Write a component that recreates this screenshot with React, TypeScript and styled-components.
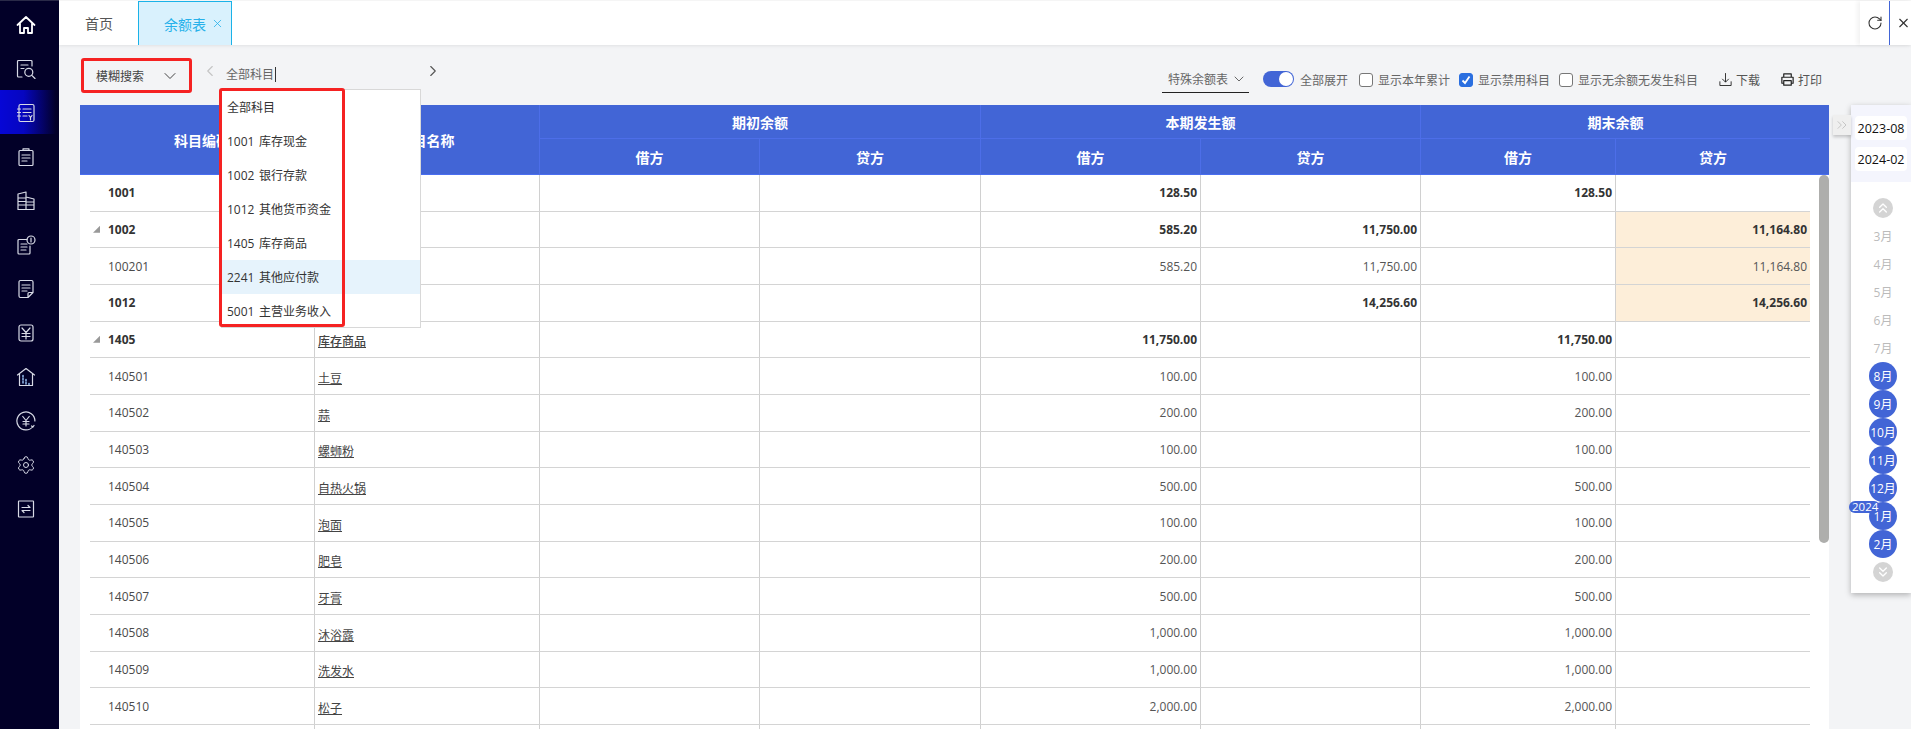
import * as React from 'react';
import styled, { createGlobalStyle } from 'styled-components';
import { ChevronDown, ChevronLeft, ChevronRight, ChevronsDown, ChevronsRight, ChevronsUp, RotateCw, Settings, X } from 'lucide-react';

type Row = {
  code: string,
  name: string,
  bold?: boolean,
  open?: boolean,
  values: { [col: number]: string },
  warn?: boolean,
};

// the names of the first four rows sit behind the open dropdown
const rows: Row[] = [
  { code: '1001', name: '', bold: true, values: { 2: '128.50', 4: '128.50' } },
  { code: '1002', name: '', bold: true, open: true, values: { 2: '585.20', 3: '11,750.00', 5: '11,164.80' }, warn: true },
  { code: '100201', name: '', values: { 2: '585.20', 3: '11,750.00', 5: '11,164.80' }, warn: true },
  { code: '1012', name: '', bold: true, values: { 3: '14,256.60', 5: '14,256.60' }, warn: true },
  { code: '1405', name: '库存商品', bold: true, open: true, values: { 2: '11,750.00', 4: '11,750.00' } },
  { code: '140501', name: '土豆', values: { 2: '100.00', 4: '100.00' } },
  { code: '140502', name: '蒜', values: { 2: '200.00', 4: '200.00' } },
  { code: '140503', name: '螺蛳粉', values: { 2: '100.00', 4: '100.00' } },
  { code: '140504', name: '自热火锅', values: { 2: '500.00', 4: '500.00' } },
  { code: '140505', name: '泡面', values: { 2: '100.00', 4: '100.00' } },
  { code: '140506', name: '肥皂', values: { 2: '200.00', 4: '200.00' } },
  { code: '140507', name: '牙膏', values: { 2: '500.00', 4: '500.00' } },
  { code: '140508', name: '沐浴露', values: { 2: '1,000.00', 4: '1,000.00' } },
  { code: '140509', name: '洗发水', values: { 2: '1,000.00', 4: '1,000.00' } },
  { code: '140510', name: '松子', values: { 2: '2,000.00', 4: '2,000.00' } },
  { code: '', name: '', values: {} },
];

const subjects = ['全部科目', '1001 库存现金', '1002 银行存款', '1012 其他货币资金', '1405 库存商品', '2241 其他应付款', '5001 主营业务收入'];
const months = ['3月', '4月', '5月', '6月', '7月', '8月', '9月', '10月', '11月', '12月', '1月', '2月'];
const BLUE = '#4265d6';

const GlobalStyle = createGlobalStyle`
  html, body {
    margin: 0;
    height: 100%;
    font-family: "Open Sans", "Noto Sans CJK SC", sans-serif;
    font-size: 12px;
  }
  * { box-sizing: border-box; }
`;

const Page = styled.div`
  display: flex;
  width: 100%;
  height: 100vh;
  overflow: hidden;
  background: #f3f4f6;
`;

const Sidebar = styled.nav`
  width: 59px;
  flex: none;
  padding-top: 1px;
  background: #020028;
  border-top: 1px solid #2a2a48;
`;

const NavItem = styled.div<{ $active?: boolean }>`
  height: 44px;
  display: flex;
  align-items: center;
  padding: 2px 0 0 16px;
  color: #d8dae6;
  background: ${p => p.$active ? 'linear-gradient(90deg, #0606d6 0%, #0606c0 40%, #020028 95%)' : 'transparent'};
`;

const Main = styled.div`
  flex: 1;
  min-width: 0;
  display: flex;
  flex-direction: column;
`;

const TabBar = styled.header`
  height: 45px;
  flex: none;
  display: flex;
  background: #fff;
  border-top: 1px solid #f5f5f5;
  box-shadow: 0 1px 3px rgba(0, 0, 0, 0.08);
  position: relative;
`;

const Tab = styled.div<{ $active?: boolean }>`
  display: flex;
  align-items: center;
  gap: 5px;
  font-size: 14px;
  padding-left: ${p => p.$active ? '25px' : '26px'};
  width: ${p => p.$active ? '94px' : '79px'};
  color: ${p => p.$active ? '#27b1ea' : '#555'};
  background: ${p => p.$active ? '#d9f1fd' : 'transparent'};
  border: ${p => p.$active ? '1px solid #1ab2e8' : 'none'};
  border-bottom: none;
`;

const TabTools = styled.div`
  margin-left: auto;
  display: flex;
  height: 44px;
  color: #333;
  box-shadow: -3px 0 4px rgba(0, 0, 0, 0.05);
`;

const ToolButton = styled.div<{ $divider?: boolean }>`
  display: flex;
  align-items: center;
  justify-content: center;
  width: ${p => p.$divider ? '30px' : '21px'};
  padding-left: ${p => p.$divider ? '0' : '6px'};
  border-right: ${p => p.$divider ? `1px solid ${BLUE}` : 'none'};
`;

const Workspace = styled.div`
  flex: 1;
  min-height: 0;
  display: flex;
`;

const LeftColumn = styled.div`
  width: 1749px;
  flex: none;
  margin-left: 21px;
  display: flex;
  flex-direction: column;
  min-height: 0;
`;

const Toolbar = styled.div`
  height: 60px;
  flex: none;
  display: flex;
  align-items: flex-start;
`;

const SearchMode = styled.div`
  width: 111px;
  height: 35px;
  margin: 13px 0 0 1px;
  padding: 0 9px 0 12px;
  display: flex;
  align-items: center;
  justify-content: space-between;
  border: 3px solid #f52222;
  border-radius: 3px;
  color: #444;
`;

const Picker = styled.div`
  position: relative;
  width: 240px;
  height: 32px;
  margin: 13px 0 0 9px;
  padding: 0 0 0 25px;
  display: flex;
  align-items: center;
  color: #666;
`;

const PickerText = styled.span`
  border-right: 1px solid #333;
  line-height: 15px;
  padding-right: 1px;
`;

const PickerArrow = styled.span<{ $side: 'left' | 'right' }>`
  position: absolute;
  top: 4px;
  display: flex;
  color: ${p => p.$side === 'left' ? '#c4c4c4' : '#555'};
  ${p => p.$side === 'left' ? 'left: 0;' : 'right: -1px;'}
`;

const Dropdown = styled.div`
  position: absolute;
  left: 20px;
  top: 31px;
  width: 200px;
  height: 239px;
  background: #fff;
  border: 1px solid #d8d8d8;
  z-index: 5;
`;

const DropdownItem = styled.div<{ $active?: boolean }>`
  height: 34px;
  padding-left: 5px;
  display: flex;
  align-items: center;
  white-space: pre;
  word-spacing: 1.5px;
  color: #333;
  background: ${p => p.$active ? '#e6f3fc' : 'transparent'};
`;

const Marker = styled.div`
  position: absolute;
  left: -3px;
  top: -2px;
  width: 126px;
  height: 239px;
  border: 3px solid #f52222;
  border-radius: 3px;
  pointer-events: none;
`;

const Options = styled.div`
  margin: 21px 7px 0 auto;
  height: 27px;
  display: flex;
  align-items: center;
  color: #666;
`;

const SpecialSelect = styled.div`
  width: 87px;
  height: 27px;
  padding-left: 6px;
  display: flex;
  align-items: center;
  gap: 3px;
  border-bottom: 1px solid #222;
  margin-right: 14px;
`;

const Switch = styled.span`
  width: 31px;
  height: 16px;
  margin: -2px 6px 0 0;
  border-radius: 8px;
  background: ${BLUE};
  position: relative;
  &::after {
    content: '';
    position: absolute;
    right: 1px;
    top: 1px;
    width: 14px;
    height: 14px;
    border-radius: 50%;
    background: #fff;
  }
`;

const Check = styled.label<{ $gap: number }>`
  display: flex;
  align-items: center;
  gap: 5px;
  margin-left: ${p => p.$gap}px;
`;

const Box = styled.span<{ $on?: boolean }>`
  width: 14px;
  height: 14px;
  display: flex;
  align-items: center;
  justify-content: center;
  border-radius: 3px;
  border: 1px solid ${p => p.$on ? '#2a6fe0' : '#777'};
  background: ${p => p.$on ? '#2a6fe0' : '#fff'};
`;

const Action = styled.div<{ $gap: number }>`
  display: flex;
  align-items: center;
  gap: 3px;
  margin-left: ${p => p.$gap}px;
  color: #555;
  svg { color: #222; }
`;

const Head = styled.div`
  flex: none;
  height: 70px;
  padding: 0 19px 0 10px;
  display: grid;
  grid-template-columns: 224px 225px 220px 221px 220px 220px 195px 195px;
  grid-template-rows: 34px 36px;
  background: ${BLUE};
  border-bottom: 1px solid #4a6ef0;
`;

const HeadCell = styled.div<{ $span?: number, $rows?: number, $line?: boolean, $under?: boolean }>`
  grid-column: span ${p => p.$span || 1};
  grid-row: span ${p => p.$rows || 1};
  display: flex;
  align-items: center;
  justify-content: center;
  color: #fff;
  font-size: 14px;
  font-weight: 700;
  border-left: ${p => p.$line ? '1px solid #4d6ee8' : 'none'};
  border-bottom: ${p => p.$under ? '1px solid #4d6ee8' : 'none'};
`;

const Body = styled.div`
  flex: 1;
  min-height: 0;
  position: relative;
  overflow: hidden;
  padding: 0 19px 0 10px;
  background: #fff;
`;

const Scrollbar = styled.div`
  position: absolute;
  top: 0;
  right: 0;
  width: 10px;
  height: 368px;
  border-radius: 5px;
  background: #aeaeac;
`;

const BodyRow = styled.div`
  height: 36.67px;
  display: grid;
  grid-template-columns: 224px 225px 220px 221px 220px 220px 195px 195px;
  border-bottom: 1px solid #d4d4d4;
`;

const CodeCell = styled.div<{ $bold?: boolean }>`
  position: relative;
  display: flex;
  align-items: center;
  padding-left: 18px;
  color: ${p => p.$bold ? '#333' : '#4a4a4a'};
  font-weight: ${p => p.$bold ? 700 : 400};
`;

const Triangle = styled.span`
  position: absolute;
  left: 3px;
  top: 14px;
  width: 7px;
  height: 7px;
  background: #999;
  clip-path: polygon(100% 0, 100% 100%, 0 100%);
`;

const NameCell = styled.div<{ $bold?: boolean }>`
  display: flex;
  align-items: center;
  padding: 4px 0 0 3px;
  border-left: 1px solid #d0d0d0;
  color: #444;
  font-weight: ${p => p.$bold ? 500 : 400};
  text-decoration: underline;
`;

const NumCell = styled.div<{ $bold?: boolean, $warn?: boolean }>`
  display: flex;
  align-items: center;
  justify-content: flex-end;
  padding-right: 3px;
  border-left: 1px solid #d0d0d0;
  color: ${p => p.$bold ? '#333' : '#555'};
  font-weight: ${p => p.$bold ? 700 : 400};
  background: ${p => p.$warn ? '#fdeed9' : 'transparent'};
`;

const RightPanel = styled.aside`
  position: relative;
  width: 60px;
  flex: none;
  margin: 60px 0 0 22px;
  align-self: flex-start;
  background: #fff;
  box-shadow: 0 2px 6px rgba(0, 0, 0, 0.28);
`;

const Collapse = styled.div`
  position: absolute;
  left: -18px;
  top: 10px;
  width: 18px;
  height: 20px;
  display: flex;
  align-items: center;
  justify-content: center;
  color: #bbb;
  background: #efefef;
  box-shadow: 0 2px 3px rgba(0, 0, 0, 0.2);
`;

const DateBox = styled.div`
  padding: 11px 4px;
  display: flex;
  flex-direction: column;
  gap: 7px;
  background: #f4f5fd;
`;

const DateChip = styled.div`
  height: 24px;
  display: flex;
  align-items: center;
  justify-content: center;
  border-radius: 4px;
  background: #fff;
  color: #111;
  font-size: 12.5px;
`;

const MonthList = styled.div`
  padding: 16px 0 11px 4px;
  display: flex;
  flex-direction: column;
  align-items: center;
`;

const RoundButton = styled.div<{ $down?: boolean }>`
  width: 20px;
  height: 20px;
  margin: ${p => p.$down ? '4px 0 0' : '0 0 4px'};
  display: flex;
  align-items: center;
  justify-content: center;
  border-radius: 50%;
  background: #d4d4d4;
  color: #fff;
`;

const Month = styled.div<{ $on?: boolean }>`
  position: relative;
  width: 28px;
  height: 28px;
  display: flex;
  align-items: center;
  justify-content: center;
  border-radius: 50%;
  font-size: 12px;
  color: ${p => p.$on ? '#fff' : '#bbb'};
  background: ${p => p.$on ? BLUE : 'transparent'};
  white-space: nowrap;
`;

const YearBadge = styled.span`
  position: absolute;
  left: -20px;
  top: -1px;
  width: 31px;
  height: 12px;
  line-height: 12px;
  padding-left: 3px;
  border-radius: 6px;
  background: ${BLUE};
  color: #fff;
  font-size: 11.5px;
`;

const Ico = ({ children, size = 20 }: { children: React.ReactNode, size?: number }) => (
  <svg width={size} height={size} viewBox="0 0 20 20" fill="none" stroke="currentColor" strokeWidth="1.2" strokeLinecap="round" strokeLinejoin="round">
    {children}
  </svg>
);

const navIcons = [
  <Ico key="home"><path stroke="#fff" strokeWidth="1.8" d="M1.5 10 10 2l8.5 8M4 8.5V18h4v-5h4v5h4V8.5" /></Ico>,
  <Ico key="search"><path d="M16 7V2.5a1 1 0 0 0-1-1H2.5a1 1 0 0 0-1 1V17a1 1 0 0 0 1 1H6M5 6h7M5 9.5h3" /><circle cx="12.8" cy="13.3" r="4" /><path d="m15.8 16.3 3.2 3.2" /></Ico>,
  <Ico key="ledger"><rect x="3" y="1.5" width="15" height="17" rx="1.5" /><path d="M7 6h8M7 9.5h8M7 13h4M1.5 6h3M1.5 9.5h3M1.5 13h3M13 12.5l1.5 2 1.5-2M14.5 14.5V17" /></Ico>,
  <Ico key="clip"><rect x="3" y="3.5" width="14" height="15" rx="1" /><path d="M7 3.5V1.8h6v1.7M6 8h8M6 11h8M6 14h5" /></Ico>,
  <Ico key="org"><path d="M2 18.5V3l8-2v17.5M10 6l8 2v10.5H2M2 7h8M2 10.5h8M2 14h8M10 11h8M10 14h8" /></Ico>,
  <Ico key="docyen"><path d="M11 4.5H3a1 1 0 0 0-1 1V18a1 1 0 0 0 1 1h10a1 1 0 0 0 1-1v-7M5 9h6M5 12h6M5 15h5" /><circle cx="15" cy="5" r="4" /><path d="M15 3v4" /></Ico>,
  <Ico key="note"><path d="M12 18.5H4.5A1.5 1.5 0 0 1 3 17V3a1.5 1.5 0 0 1 1.5-1.5h11A1.5 1.5 0 0 1 17 3v10.5zM17 13.5h-4a1 1 0 0 0-1 1v4M6 6h8M6 9h8M6 12h5" /></Ico>,
  <Ico key="yen"><rect x="3" y="2" width="14" height="16" rx="2" /><path d="M6 5l4 4.5L14 5M10 9.5V16M6 10.5h8M6 13.5h8" /></Ico>,
  <Ico key="housedot"><path d="M1.5 8 10 1.5 18.5 8M3.5 6.5V18.5h13V6.5" /><path strokeWidth="1.6" strokeDasharray="1.5 1.5" d="M7 8.5v9M10 12.5v5M13 16.5v1" stroke="#8fb4e6" /></Ico>,
  <Ico key="yencircle"><path d="M17 15.5a9 9 0 1 1 1.9-5.5M6.8 5.5 10 9.5l3.2-4M10 9.5V15M7 10.5h6M7 13h6M15.5 15l1.5 1 1-1.5" /></Ico>,
  <Settings key="gear" size={20} strokeWidth={1.2} />,
  <Ico key="swap"><rect x="2.5" y="2" width="15" height="16" rx="0.5" /><path d="M6 8.5h8l-2-2M14 11.5H6l2 2" /></Ico>,
];

const Tick = () => (
  <svg width="10" height="10" viewBox="0 0 10 10" fill="none" stroke="#fff" strokeWidth="1.8"><path d="M1.5 5.5 4 8l4.5-6.5" /></svg>
);

export default function App() {
  return (
    <Page>
      <GlobalStyle />
      <Sidebar>
        {navIcons.map((icon, i) => <NavItem key={i} $active={i === 2}>{icon}</NavItem>)}
      </Sidebar>
      <Main>
        <TabBar>
          <Tab>首页</Tab>
          <Tab $active>余额表 <X size={13} strokeWidth={1.5} /></Tab>
          <TabTools>
            <ToolButton $divider><RotateCw size={16} strokeWidth={1.6} /></ToolButton>
            <ToolButton><X size={16} strokeWidth={1.8} /></ToolButton>
          </TabTools>
        </TabBar>
        <Workspace>
          <LeftColumn>
            <Toolbar>
              <SearchMode>模糊搜索 <ChevronDown size={20} strokeWidth={1.2} /></SearchMode>
              <Picker>
                <PickerArrow $side="left"><ChevronLeft size={18} strokeWidth={1.5} /></PickerArrow>
                <PickerText>全部科目</PickerText>
                <PickerArrow $side="right"><ChevronRight size={18} strokeWidth={1.5} /></PickerArrow>
                <Dropdown>
                  {subjects.map((s, i) => <DropdownItem key={s} $active={i === 5}>{s}</DropdownItem>)}
                  <Marker />
                </Dropdown>
              </Picker>
              <Options>
                <SpecialSelect>特殊余额表 <ChevronDown size={16} strokeWidth={1.2} color="#444" /></SpecialSelect>
                <Switch />
                <span>全部展开</span>
                <Check $gap={11}><Box />显示本年累计</Check>
                <Check $gap={9}><Box $on><Tick /></Box>显示禁用科目</Check>
                <Check $gap={9}><Box />显示无余额无发生科目</Check>
                <Action $gap={20}>
                  <Ico size={15}><path d="M10 2v11M6 9.5l4 4 4-4M2.5 13v5h15v-5" /></Ico>下载
                </Action>
                <Action $gap={20}>
                  <Ico size={15}><path strokeWidth="1.6" d="M5 7V2.5h10V7M5 15H2.5V7h15v8H15M5 11.5h10v6H5z" /></Ico>打印
                </Action>
              </Options>
            </Toolbar>
            <Head>
              <HeadCell $rows={2}>科目编码</HeadCell>
              <HeadCell $rows={2}>科目名称</HeadCell>
              <HeadCell $span={2} $line $under>期初余额</HeadCell>
              <HeadCell $span={2} $line $under>本期发生额</HeadCell>
              <HeadCell $span={2} $line $under>期末余额</HeadCell>
              {['借方', '贷方', '借方', '贷方', '借方', '贷方'].map((t, i) => <HeadCell key={i} $line>{t}</HeadCell>)}
            </Head>
            <Body>
              {rows.map((r, i) => (
                <BodyRow key={i}>
                  <CodeCell $bold={r.bold}>{r.open && <Triangle />}{r.code}</CodeCell>
                  <NameCell $bold={r.bold}>{r.name}</NameCell>
                  {[0, 1, 2, 3, 4, 5].map(c => (
                    <NumCell key={c} $bold={r.bold} $warn={r.warn && c === 5}>{r.values[c]}</NumCell>
                  ))}
                </BodyRow>
              ))}
              <Scrollbar />
            </Body>
          </LeftColumn>
          <RightPanel>
            <Collapse><ChevronsRight size={16} strokeWidth={1.2} /></Collapse>
            <DateBox>
              <DateChip>2023-08</DateChip>
              <DateChip>2024-02</DateChip>
            </DateBox>
            <MonthList>
              <RoundButton><ChevronsUp size={16} strokeWidth={2} /></RoundButton>
              {months.map((m, i) => (
                <Month key={m} $on={i >= 5}>
                  {m}
                  {m === '1月' && <YearBadge>2024</YearBadge>}
                </Month>
              ))}
              <RoundButton $down><ChevronsDown size={16} strokeWidth={2} /></RoundButton>
            </MonthList>
          </RightPanel>
        </Workspace>
      </Main>
    </Page>
  );
}
